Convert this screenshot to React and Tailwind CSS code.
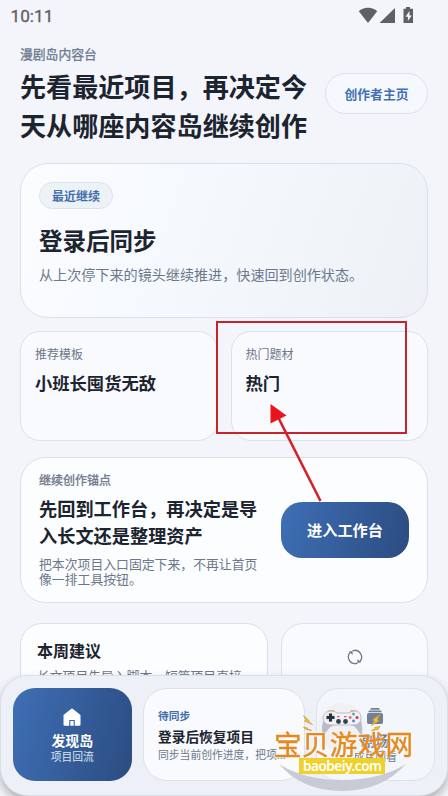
const templates = [
  { label: "推荐模板", title: "小班长囤货无敌" },
  { label: "热门题材", title: "热门" },
];

function StatusBar() {
  return (
    <div className="flex h-8 items-center justify-between pl-[10.5px] pr-[34px] font-[Roboto,sans-serif] text-[17.2px] leading-8 text-[#5f6063]">
      <span className="[-webkit-text-stroke:0.3px]">10:11</span>
      <svg width="56" height="18" viewBox="0 0 56 18" fill="#5f6063" className="-mt-[3px]">
        <path d="M.8 5.2C3 3.2 6.200 1.800 10 1.800s7 1.400 9.200 3.400L10 17z" />
        <path d="M37 2v15H21.500z" />
        <path fillRule="evenodd" d="M48 1h4v1.800h3v14.200h-9.500V2.800H48zM51.500 5l-4 5.800h2.400V15l3.800-5.600h-2.200z" />
      </svg>
    </div>
  );
}

function Header() {
  return (
    <header className="flex h-[118px] items-start justify-between pt-[13px]">
      <div className="w-[290px]">
        <p className="text-[12.8px] leading-[18px] text-[#6b7a90] [-webkit-text-stroke:0.3px]">漫剧岛内容台</p>
        <h1 className="mt-[4px] text-[26.1px] font-bold leading-[39px] text-[#1c2430]">
          先看最近项目，再决定今
          <br />
          天从哪座内容岛继续创作
        </h1>
      </div>
      <button className="mt-[28px] h-[41px] w-[103px] shrink-0 rounded-full border border-[#dae3ec] bg-[#f5f9fe] text-[12.8px] font-bold text-[#4570b3]">
        创作者主页
      </button>
    </header>
  );
}

function ContinueCard() {
  return (
    <section className="mt-[13px] h-[155px] rounded-[28px] border border-[#d8e1ea] bg-linear-[110deg,#fbfcfe_0%,#f4f8fd_50%,#edf1f6_100%] px-[18px] pt-[18px]">
      <span className="flex h-[27px] w-[74px] items-center justify-center rounded-full border border-[#dae3ea] bg-[#edf2f7] text-[12px] font-bold text-[#426cac]">
        最近继续
      </span>
      <h2 className="mt-[13px] text-[23.5px] font-bold leading-[36px] text-[#1c2430]">登录后同步</h2>
      <p className="mt-[5px] whitespace-nowrap text-[14.1px] leading-[22px] text-[#6b788b]">从上次停下来的镜头继续推进，快速回到创作状态。</p>
    </section>
  );
}

function AnchorCard() {
  return (
    <section className="mt-[16px] flex h-[146px] items-start justify-between rounded-[26px] border border-[#dae0e9] bg-[#fcfdfe] pl-[18px] pr-[18px] pt-[13px]">
      <div>
        <p className="text-[12px] leading-[18px] text-[#6b788b] [-webkit-text-stroke:0.3px]">继续创作锚点</p>
        <h2 className="mt-[6px] text-[18.2px] font-bold leading-[27px] text-[#1c2430]">
          先回到工作台，再决定是导
          <br />
          入长文还是整理资产
        </h2>
        <p className="mt-[7px] text-[12.85px] leading-[15px] text-[#6b788b]">
          把本次项目入口固定下来，不再让首页
          <br />
          像一排工具按钮。
        </p>
      </div>
      <button className="mt-[31px] h-[56px] w-[128px] shrink-0 rounded-[21px] bg-linear-[105deg,#3f6fb6,#2b4c80] pb-px text-[15.2px] font-bold text-white">
        进入工作台
      </button>
    </section>
  );
}

function SuggestRow() {
  return (
    <div className="mt-[20px] flex gap-[13px]">
      <section className="h-[110px] w-[248px] rounded-[22px] border border-[#dae0e9] bg-[#fcfdfe] px-[16px] pt-[14px]">
        <h3 className="text-[16px] font-bold leading-[24px] text-[#1c2430]">本周建议</h3>
        <p className="mt-[5px] whitespace-nowrap text-[12.8px] leading-[18px] text-[#6b788b]">长文项目先导入脚本，短篇项目直接</p>
      </section>
      <section className="flex h-[110px] flex-1 justify-center rounded-[22px] border border-[#dae2eb] bg-[#f9fafd] pt-[25px]">
        <svg width="16" height="16" viewBox="0 0 16 16" fill="none" stroke="#6b7a8f" strokeWidth="1.3">
          <path d="M8 14.700A6.700 6.700 0 0 1 3.300 3.300M5.500 1.800A6.700 6.700 0 0 1 12.700 12.700M10.500 14.200A6.700 6.700 0 0 1 8 14.700" />
          <path fill="#6b7a8f" stroke="none" d="M2 2.200h3.600v3.700zM14 13.800h-3.600v-3.700z" />
        </svg>
      </section>
    </div>
  );
}

function Dock() {
  return (
    <nav className="absolute inset-x-0 bottom-0 flex h-[121px] gap-[11px] rounded-[28px] border border-[#d8e0e9] bg-[#edf1f7] px-[12px] pt-[12px] shadow-[0_5px_10px_rgba(0,0,0,0.28)]">
      <div className="flex h-[93px] w-[118.5px] shrink-0 flex-col items-center rounded-[22px] bg-linear-[105deg,#3f6fb6,#2b4c80] pt-[20px] text-white">
        <svg width="18" height="18" viewBox="0 0 18 18">
          <path fill="#fff" d="M9 .3 17.500 7v9.500q0 1.300-1.300 1.300H1.800Q.5 17.800.5 16.500V7z" />
          <path fill="none" stroke="#3b65a4" strokeWidth="1.1" d="M6.800 18v-5.500h4.400V18" />
        </svg>
        <b className="mt-[4px] text-[13.9px] leading-[20px]">发现岛</b>
        <span className="text-[10.8px] leading-[13px] text-[#dce5f3]">项目回流</span>
      </div>
      <div className="h-[93px] w-[162.5px] shrink-0 rounded-[24px] border border-[#dae2eb] bg-[#f9fafd] pl-[14.5px] pt-[19px]">
        <p className="text-[10.7px] font-bold leading-[16px] text-[#426cac]">待同步</p>
        <p className="mt-[2px] text-[13.7px] font-bold leading-[20px] text-[#1c2430]">登录后恢复项目</p>
        <p className="whitespace-nowrap text-[10.8px] leading-[16px] text-[#6b788b]">同步当前创作进度，把项...</p>
      </div>
      <div className="flex h-[93px] w-[118.5px] shrink-0 flex-col items-center rounded-[22px] border border-[#dae2eb] bg-[#f3f6fb] pt-[18px] text-[#6b788b]">
        <svg width="16" height="18" viewBox="0 0 16 18" fill="#728197">
          <rect x="3.5" y="1" width="9" height="1.8" rx=".6" />
          <rect x="1.5" y="3.5" width="13" height="1.8" rx=".6" />
          <rect y="6" width="16" height="11" rx="1.8" />
        </svg>
        <b className="mt-[5px] text-[13.9px] leading-[20px]">剧场</b>
        <span className="text-[10.8px] leading-[13px]">成片回看</span>
      </div>
    </nav>
  );
}

function Watermark() {
  return (
    <svg className="absolute bottom-0 left-[270px]" width="150" height="96" viewBox="270 700 150 96">
      <circle cx="342" cy="727" r="24" fill="#eeeeef" opacity=".65" />
      <path fill="#c8cbd6" d="M279 764q25 16 63 16t64-16q-24 27-64 27t-63-27z" />
      <path fill="#e8b544" d="M328 711.500q0-1.500 2-1.500h4l1 2.500h-7zM350 712l1-2h4q2 0 2 2.500h-7z" />
      <path fill="#b9bdca" d="M323 721q-2 8 0 14l4-4q4-6 9-6h14q5 0 8 6l4 5q1-8-1-16z" />
      <path fill="#f2f1f5" stroke="#aeb3c2" strokeWidth=".8" d="M323 717q2-6 8-6 4 0 6 2h12q2-2 6-2 5 0 6 6 0 8-7 8h-23q-8 0-8-8z" />
      <circle cx="330.5" cy="717.5" r="4.7" fill="#dfe3ea" />
      <path fill="#26333f" d="M329 713.500h3v2.500h2.500v3H332v2.500h-3V719h-2.500v-3h2.500z" />
      <circle cx="338.5" cy="721.5" r="2.4" fill="#30404d" />
      <circle cx="345.5" cy="721.5" r="2.4" fill="#30404d" />
      <circle cx="353.5" cy="714" r="1.5" fill="#42b5c7" />
      <circle cx="350.2" cy="717.5" r="1.4" fill="#e06886" />
      <circle cx="357" cy="717.5" r="1.5" fill="#d23b3b" />
      <circle cx="353.5" cy="721" r="1.4" fill="#4d87c4" />
      <path stroke="#d85579" strokeWidth="1.3" d="M337 716.700h2.500M344 716.700h2.500" />
      <g fill="#f0bd35" stroke="#d99824" strokeWidth=".7">
        <path d="m303.500 715.500 6 5.500-1 1 4 2.500-8-3.500 1.500-1zM303.500 727l4 1v1l4 1.500-6.500-1.500zM380 714.500l-7.500 5.500 2 1-3 4.500 7-4.500-1-2zM380 726.500l-5.500 1 1 1-4 2 6.500-1z" />
      </g>
      <text x="274" y="754.5" textLength="139" className="fill-[#e58a1f] stroke-[#e58a1f] stroke-[0.4px] font-['Noto_Sans_CJK_SC',sans-serif] text-[27.6px] font-normal drop-shadow-[0_0_1px_rgba(255,255,255,0.9)]">宝贝游戏网</text>
      <rect x="299" y="758" width="86" height="16" fill="#eed12a" />
      <text x="303" y="770.5" textLength="79" className="fill-white font-['Noto_Sans',sans-serif] text-[13.5px] font-semibold">baobeiy.com</text>
    </svg>
  );
}

function Annotation() {
  return (
    <svg className="absolute left-[210px] top-[315px]" width="205" height="190" viewBox="210 315 205 190">
      <rect x="217" y="322" width="189" height="111" fill="none" stroke="#c5242d" strokeWidth="2" />
      <path d="M320.500 501 278 417" stroke="#d81f27" strokeWidth="2.6" />
      <path d="M270.500 404v19.500l16-8z" fill="#ea141c" />
    </svg>
  );
}

export default function App() {
  return (
    <div className="relative h-[796px] w-[448px] overflow-hidden bg-[#f3f5fa] font-['Noto_Sans_CJK_SC',sans-serif]">
      <StatusBar />
      <main className="px-5">
        <Header />
        <ContinueCard />
        <div className="mt-[13px] grid grid-cols-2 gap-[13px]">
          {templates.map((item) => (
            <section key={item.label} className="h-[110px] rounded-[20px] border border-[#dae2eb] bg-[#f9fafd] px-[14px] pt-[13px]">
              <p className="text-[12px] leading-[18px] text-[#6b788b]">{item.label}</p>
              <h3 className="mt-[7px] text-[17.3px] font-bold leading-[26px] text-[#1c2430]">{item.title}</h3>
            </section>
          ))}
        </div>
        <AnchorCard />
        <SuggestRow />
      </main>
      <Dock />
      <Watermark />
      <Annotation />
    </div>
  );
}
